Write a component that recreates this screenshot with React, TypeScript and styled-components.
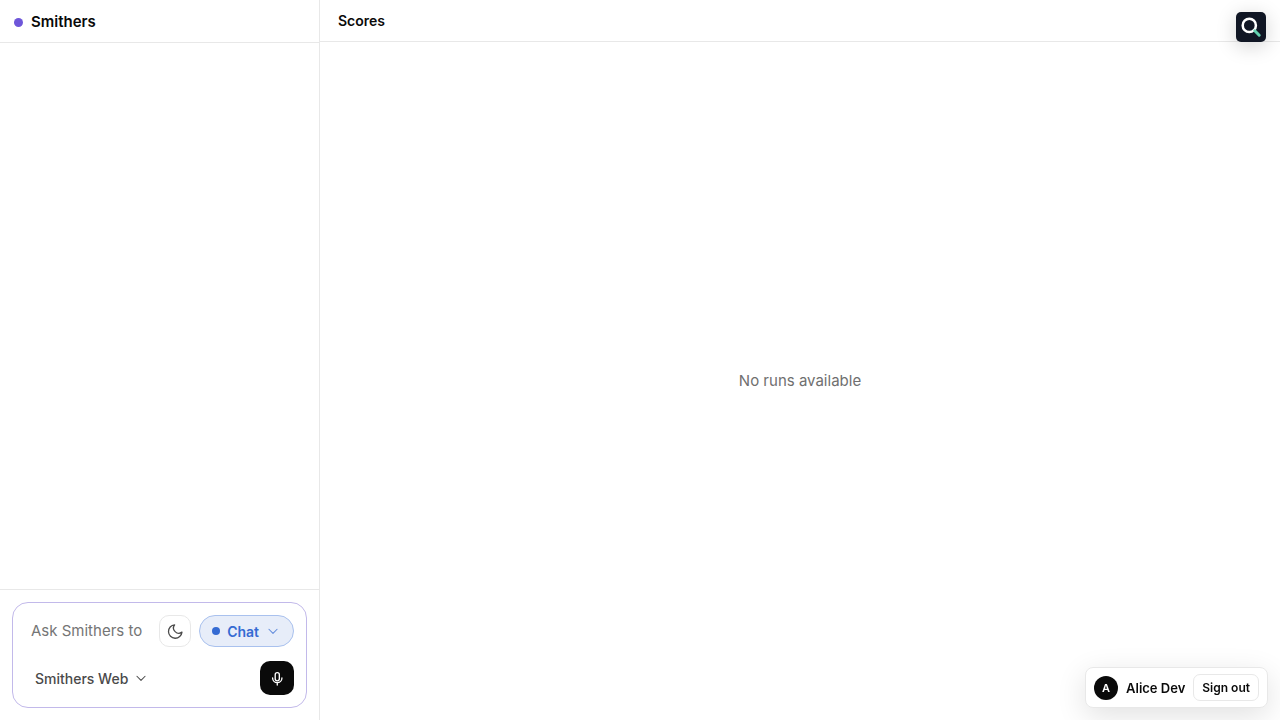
import React from "react";
import styled, { createGlobalStyle } from "styled-components";

const GlobalStyle = createGlobalStyle`
  *, *::before, *::after { box-sizing: border-box; }
  body {
    margin: 0;
    background: #fff;
    color: #0a0a0a;
    font-family: Inter, "Liberation Sans", sans-serif;
    -webkit-font-smoothing: antialiased;
  }
  button, textarea { font-family: inherit; margin: 0; }
  button { cursor: pointer; }
`;

const line = "#e8e8e8";

const Shell = styled.div`
  display: grid;
  grid-template-columns: 320px minmax(0, 1fr);
  min-height: 100vh;
`;

const Sidebar = styled.aside`
  display: flex;
  flex-direction: column;
  border-right: 1px solid ${line};
`;

const SidebarHeader = styled.header`
  display: flex;
  align-items: center;
  gap: 8px;
  padding: 12px 14px 10px;
  border-bottom: 1px solid ${line};
`;

const Dot = styled.span<{ $size: number; $color: string }>`
  flex: none;
  width: ${(p) => p.$size}px;
  height: ${(p) => p.$size}px;
  border-radius: 50%;
  background: ${(p) => p.$color};
`;

const Brand = styled.h1`
  margin: 0;
  font-size: 15px;
  line-height: 20px;
  font-weight: 600;
`;

const Messages = styled.div`
  flex: 1;
`;

const ComposerArea = styled.div`
  padding: 12px;
  border-top: 1px solid ${line};
`;

const Composer = styled.form`
  display: flex;
  flex-direction: column;
  gap: 14px;
  padding: 12px;
  border: 1px solid #c2b9ea;
  border-radius: 16px;
`;

const ComposerRow = styled.div`
  display: flex;
  align-items: center;
  justify-content: space-between;
  gap: 8px;
`;

const Prompt = styled.textarea`
  flex: 1;
  min-width: 0;
  height: 32px;
  padding: 4px 0 4px 6px;
  border: 0;
  outline: 0;
  resize: none;
  overflow: hidden;
  background: transparent;
  color: #0a0a0a;
  font-size: 15px;
  line-height: 24px;
  &::placeholder { color: #757575; }
`;

const ThemeButton = styled.button`
  display: grid;
  place-items: center;
  width: 32px;
  height: 32px;
  padding: 0;
  border: 1px solid ${line};
  border-radius: 10px;
  background: #fff;
  color: #4a4a4a;
`;

const ModeButton = styled.button`
  display: flex;
  align-items: center;
  height: 32px;
  gap: 7px;
  padding: 0 13px 0 12px;
  border: 1px solid #a9c1ee;
  border-radius: 16px;
  background: #e7edf9;
  color: #356bd3;
  font-size: 14px;
  font-weight: 600;
  svg { opacity: 0.75; }
`;

const WorkspaceButton = styled.button`
  display: flex;
  align-items: center;
  gap: 6px;
  height: 32px;
  padding: 0 10px;
  border: 0;
  background: transparent;
  color: #4a4a4a;
  font-size: 14px;
  font-weight: 500;
`;

const MicButton = styled.button`
  display: grid;
  place-items: center;
  width: 34px;
  height: 34px;
  padding: 0;
  border: 0;
  border-radius: 10px;
  background: #0a0a0a;
  color: #fff;
`;

const Main = styled.main`
  display: flex;
  flex-direction: column;
`;

const MainHeader = styled.header`
  padding: 12px 18px;
  border-bottom: 1px solid ${line};
`;

const Title = styled.h2`
  margin: 0;
  font-size: 14px;
  line-height: 17px;
  font-weight: 600;
`;

const Empty = styled.p`
  flex: 1;
  display: grid;
  place-items: center;
  margin: 0;
  color: #6f6f6f;
  font-size: 15px;
  line-height: 20px;
`;

const InspectButton = styled.button`
  position: fixed;
  top: 12px;
  right: 14px;
  width: 30px;
  height: 30px;
  padding: 0;
  border: 0;
  border-radius: 5px;
  background: #101624;
  box-shadow: 0 4px 20px rgba(0, 0, 0, 0.18);
  svg { display: block; }
`;

const Account = styled.section`
  position: fixed;
  right: 12px;
  bottom: 12px;
  display: flex;
  align-items: center;
  gap: 8px;
  padding: 6px 8px;
  border: 1px solid ${line};
  border-radius: 8px;
  background: #fff;
  box-shadow: 0 8px 30px rgba(0, 0, 0, 0.12);
  font-size: 13px;
  font-weight: 600;
`;

const Avatar = styled.span`
  display: grid;
  place-items: center;
  width: 24px;
  height: 24px;
  border-radius: 50%;
  background: #0a0a0a;
  color: #fff;
  font-size: 11px;
`;

const SignOut = styled.button`
  height: 27px;
  padding: 0 8px;
  border: 1px solid ${line};
  border-radius: 7px;
  background: #fff;
  color: #0a0a0a;
  font-size: 12px;
  font-weight: 600;
`;

const Chevron = () => (
  <svg width="14" height="14" viewBox="0 0 24 24" fill="none" stroke="currentColor" strokeWidth="1.8" strokeLinecap="round" strokeLinejoin="round" aria-hidden="true">
    <path d="m5 9 7 7 7-7" />
  </svg>
);

const Moon = () => (
  <svg width="18" height="18" viewBox="0 0 24 24" fill="none" stroke="currentColor" strokeWidth="1.7" strokeLinecap="round" strokeLinejoin="round" aria-hidden="true">
    <path d="M21.300 13.500A9 9 0 1 1 11.500 3.700 7 7 0 0 0 21.300 13.500z" />
  </svg>
);

const Mic = () => (
  <svg width="16" height="16" viewBox="0 0 24 24" fill="none" stroke="currentColor" strokeWidth="2" strokeLinecap="round" strokeLinejoin="round" aria-hidden="true">
    <rect x="9.300" y="4" width="6.200" height="12.300" rx="3.100" />
    <path d="M5.400 12a7 7 0 0 0 14 0M12.400 19v3.500" />
  </svg>
);

const Magnifier = () => (
  <svg width="30" height="30" viewBox="0 0 30 30" fill="none" aria-hidden="true">
    <circle cx="13.300" cy="13.400" r="6.600" stroke="#fff" strokeWidth="2.500" />
    <path d="m18.800 18.800 4.400 4.400" stroke="#63d2b0" strokeWidth="3" strokeLinecap="round" />
  </svg>
);

export default function App() {
  return (
    <>
      <GlobalStyle />
      <Shell>
        <Sidebar>
          <SidebarHeader>
            <Dot $size={9} $color="#6e56d9" />
            <Brand>Smithers</Brand>
          </SidebarHeader>
          <Messages />
          <ComposerArea>
            <Composer onSubmit={(e) => e.preventDefault()}>
              <ComposerRow>
                <Prompt rows={1} placeholder="Ask Smithers to" aria-label="Message" />
                <ThemeButton type="button" aria-label="Toggle theme"><Moon /></ThemeButton>
                <ModeButton type="button">
                  <Dot $size={8} $color="#356bd3" />
                  Chat
                  <Chevron />
                </ModeButton>
              </ComposerRow>
              <ComposerRow>
                <WorkspaceButton type="button">
                  Smithers Web
                  <Chevron />
                </WorkspaceButton>
                <MicButton type="button" aria-label="Dictate"><Mic /></MicButton>
              </ComposerRow>
            </Composer>
          </ComposerArea>
        </Sidebar>
        <Main>
          <MainHeader>
            <Title>Scores</Title>
          </MainHeader>
          <Empty>No runs available</Empty>
        </Main>
      </Shell>
      <InspectButton type="button" aria-label="Inspect"><Magnifier /></InspectButton>
      <Account aria-label="Account">
        <Avatar>A</Avatar>
        <span>Alice Dev</span>
        <SignOut type="button">Sign out</SignOut>
      </Account>
    </>
  );
}
